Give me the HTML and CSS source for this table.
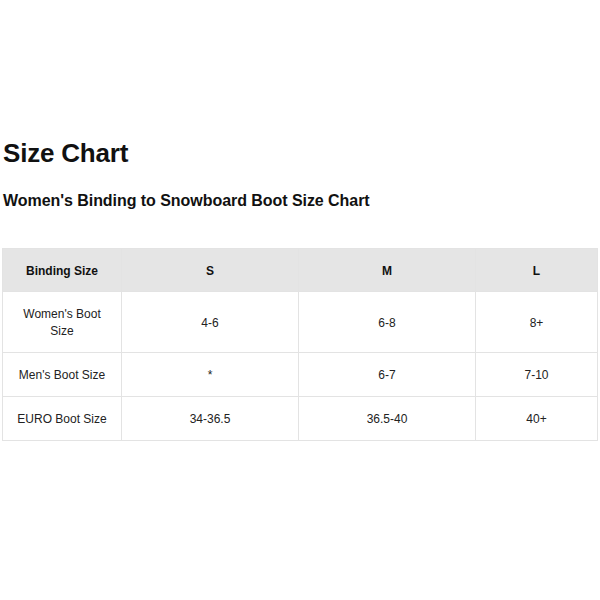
FILE: index.html
```html
<!DOCTYPE html>
<html>
<head>
<meta charset="utf-8">
<link rel="stylesheet" href="styles.css">
</head>
<body>
<div class="page">
  <h1 class="title">Size Chart</h1>
  <h2 class="subtitle">Women's Binding to Snowboard Boot Size Chart</h2>
  <table class="chart">
    <colgroup>
      <col class="c1"><col class="c2"><col class="c3"><col class="c4">
    </colgroup>
    <thead>
      <tr><th>Binding Size</th><th>S</th><th>M</th><th>L</th></tr>
    </thead>
    <tbody>
      <tr class="r1"><td>Women's Boot<br>Size</td><td>4-6</td><td>6-8</td><td>8+</td></tr>
      <tr class="r2"><td>Men's Boot Size</td><td>*</td><td>6-7</td><td>7-10</td></tr>
      <tr class="r3"><td>EURO Boot Size</td><td>34-36.5</td><td>36.5-40</td><td>40+</td></tr>
    </tbody>
  </table>
</div>
</body>
</html>
```
FILE: styles.css
```css
html, body { margin: 0; padding: 0; background: #fff; }
body { font-family: "Liberation Sans", Arial, sans-serif; color: #111; }
.page { padding: 136px 2px 0 2px; }
.title { font-size: 26px; font-weight: bold; margin: 0 0 0 1px; line-height: 34px; letter-spacing: -0.2px; }
.subtitle { font-size: 16px; font-weight: bold; margin: 20px 0 0 1px; line-height: 22px; letter-spacing: -0.05px; }
.chart { margin-top: 36px; width: 595px; border-collapse: collapse; table-layout: fixed; font-size: 12px; color: #222; }
.c1 { width: 119px; } .c2 { width: 177px; } .c3 { width: 177px; } .c4 { width: 122px; }
.chart th, .chart td { border: 1px solid #e3e3e3; text-align: center; padding: 2px 8px 0 8px; line-height: 17px; }
.chart th { background: #e5e5e5; height: 40px; font-weight: bold; font-size: 12px; color: #111; }
.r1 td { height: 58px; }
.r2 td { height: 41px; }
.r3 td { height: 41px; }
```
